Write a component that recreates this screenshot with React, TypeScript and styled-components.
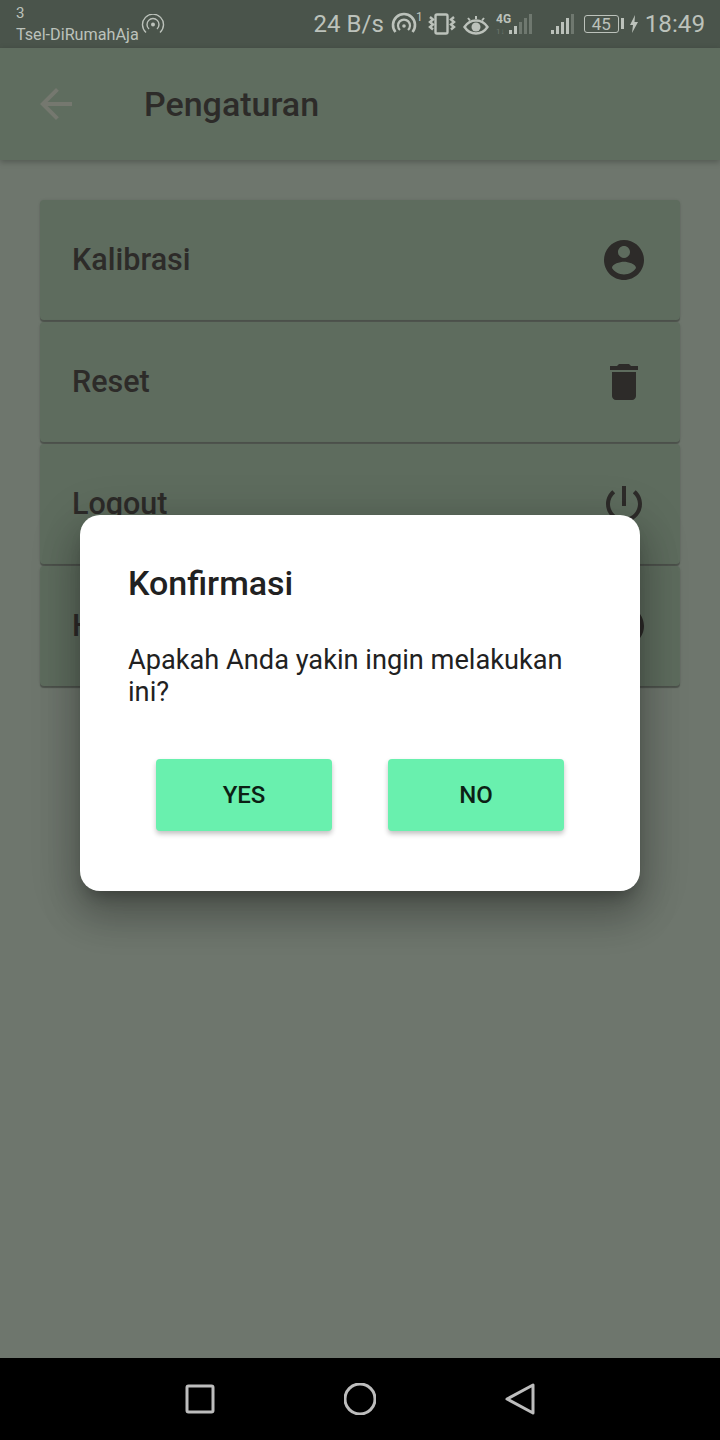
import * as React from 'react';
import styled, { createGlobalStyle } from 'styled-components';

const GlobalStyle = createGlobalStyle`
  html, body {
    margin: 0;
    padding: 0;
    background: #6e766d;
    font-family: Roboto, "Liberation Sans", sans-serif;
  }
`;

const Screen = styled.div`
  position: relative;
  width: 720px;
  height: 1440px;
  display: flex;
  flex-direction: column;
  overflow: hidden;
  background: #6e766d;
`;

const StatusBar = styled.div`
  height: 48px;
  flex: none;
  display: flex;
  align-items: center;
  justify-content: space-between;
  padding: 0 15px 0 16px;
  background: #4a544b;
  color: #bcc2bb;
`;

const CarrierGroup = styled.div`
  align-self: flex-start;
  display: flex;
  align-items: flex-start;
  gap: 2px;
`;

const CarrierText = styled.div`
  display: flex;
  flex-direction: column;
  font-size: 15px;
  line-height: 18px;
  margin-top: 4px;
`;

const CarrierName = styled.span`
  font-size: 16.2px;
  line-height: 20px;
  margin-top: 3px;
`;

const HotspotIcon = styled.svg`
  width: 24px;
  height: 24px;
  margin-top: 14px;
`;

const StatusRight = styled.div`
  display: flex;
  align-items: center;
`;

const Speed = styled.span`
  font-size: 24px;
  margin-right: 7px;
`;

const StatusIcon = styled.svg<{ $gap?: number }>`
  display: block;
  flex: none;
  margin-right: ${(p) => p.$gap ?? 0}px;
`;

const Battery = styled.div`
  position: relative;
  width: 35px;
  height: 18px;
  box-sizing: border-box;
  border: 1.5px solid #bcc2bb;
  border-radius: 3px;
  margin-right: 10px;
  font-size: 17px;
  line-height: 16px;
  text-align: center;

  &::after {
    content: '';
    position: absolute;
    right: -6px;
    top: 2px;
    width: 3px;
    height: 11px;
    background: #bcc2bb;
  }
`;

const Clock = styled.span`
  font-size: 24.2px;
  margin-left: 6px;
`;

const AppBar = styled.div`
  height: 112px;
  flex: none;
  display: flex;
  align-items: center;
  gap: 64px;
  padding-left: 32px;
  background: #5f6d5f;
  box-shadow: 0 2px 6px rgba(0, 0, 0, 0.25);
  z-index: 1;
`;

const BackIcon = styled.svg`
  width: 48px;
  height: 48px;
  fill: #75786f;
`;

const Title = styled.h1`
  margin: 0;
  font-size: 34px;
  font-weight: 500;
  color: #2d2b29;
`;

const Main = styled.div`
  flex: 1;
  display: flex;
  flex-direction: column;
  gap: 2px;
  padding: 40px;
`;

const Card = styled.div`
  height: 120px;
  flex: none;
  box-sizing: border-box;
  display: flex;
  align-items: center;
  justify-content: space-between;
  padding: 0 32px;
  background: #5e6c5e;
  border-radius: 4px;
  box-shadow: 0 2px 1px rgba(0, 0, 0, 0.28), 0 0 3px rgba(0, 0, 0, 0.1);
`;

const CardLabel = styled.span`
  padding-bottom: 2px;
  font-size: 30.5px;
  font-weight: 500;
  color: #2d2b29;
`;

const CardIcon = styled.svg`
  width: 48px;
  height: 48px;
  fill: #2d2b29;
`;

const NavBar = styled.div`
  height: 82px;
  flex: none;
  display: flex;
  align-items: center;
  justify-content: center;
  gap: 128px;
  background: #000;
`;

const NavIcon = styled.svg`
  width: 32px;
  height: 32px;
  fill: none;
  stroke: #bdbdbd;
  stroke-width: 3;
  stroke-linejoin: round;
`;

const Overlay = styled.div`
  position: absolute;
  top: 48px;
  left: 0;
  right: 0;
  bottom: 82px;
  z-index: 2;
  display: flex;
  align-items: center;
  justify-content: center;
`;

const Dialog = styled.div`
  width: 560px;
  height: 376px;
  box-sizing: border-box;
  padding: 48px 48px 0;
  background: #fff;
  border-radius: 20px;
  box-shadow: 0 24px 38px 3px rgba(0, 0, 0, 0.2), 0 9px 46px 8px rgba(0, 0, 0, 0.14),
    0 11px 15px -7px rgba(0, 0, 0, 0.26);
`;

const DialogTitle = styled.h2`
  margin: 0;
  font-size: 34px;
  line-height: 40px;
  font-weight: 500;
  color: #212121;
`;

const DialogBody = styled.p`
  margin: 41px 0 0;
  font-size: 27.2px;
  line-height: 32px;
  font-weight: 400;
  color: #212121;
`;

const DialogActions = styled.div`
  display: flex;
  justify-content: center;
  gap: 56px;
  margin-top: 51px;
`;

const DialogButton = styled.button`
  width: 176px;
  height: 72px;
  border: none;
  padding: 0;
  border-radius: 4px;
  background: #69f0ae;
  color: #0c1f15;
  font-family: inherit;
  font-size: 24px;
  font-weight: 500;
  box-shadow: 0 3px 5px rgba(0, 0, 0, 0.24);
`;

const cards = [
  {
    label: 'Kalibrasi',
    icon: 'M12 2C6.48 2 2 6.48 2 12s4.48 10 10 10 10-4.48 10-10S17.52 2 12 2zm0 3c1.66 0 3 1.34 3 3s-1.34 3-3 3-3-1.34-3-3 1.34-3 3-3zm0 14.2c-2.5 0-4.71-1.28-6-3.22.03-1.99 4-3.08 6-3.08 1.99 0 5.97 1.09 6 3.08-1.29 1.94-3.5 3.22-6 3.22z',
  },
  {
    label: 'Reset',
    icon: 'M6 19c0 1.1.9 2 2 2h8c1.1 0 2-.9 2-2V7H6v12zM19 4h-3.5l-1-1h-5l-1 1H5v2h14V4z',
  },
  {
    label: 'Logout',
    icon: 'M13 3h-2v10h2V3zm4.83 2.17l-1.42 1.42C17.99 7.86 19 9.81 19 12c0 3.87-3.13 7-7 7s-7-3.13-7-7c0-2.19 1.01-4.14 2.58-5.42L6.17 5.17C4.23 6.82 3 9.26 3 12c0 4.97 4.03 9 9 9s9-4.03 9-9c0-2.74-1.23-5.18-3.17-6.83z',
  },
  {
    label: 'Help',
    icon: 'M12 2C6.48 2 2 6.48 2 12s4.48 10 10 10 10-4.48 10-10S17.52 2 12 2zm1 17h-2v-2h2v2zm2.07-7.75l-.9.92C13.45 12.9 13 13.5 13 15h-2v-.5c0-1.1.45-2.1 1.17-2.83l1.24-1.26c.37-.36.59-.86.59-1.41 0-1.1-.9-2-2-2s-2 .9-2 2H8c0-2.21 1.79-4 4-4s4 1.79 4 4c0 .88-.36 1.68-.93 2.25z',
  },
];

function SignalBars({ lit, x = 0 }: { lit: number; x?: number }) {
  const bars = [0, 1, 2, 3, 4];
  return (
    <>
      {bars.map((i) => {
        const h = 4 + i * 4;
        return (
          <rect
            key={i}
            x={x + i * 5}
            y={22 - h}
            width={3}
            height={h}
            fill={i < lit ? '#bcc2bb' : '#6f786f'}
          />
        );
      })}
    </>
  );
}

export default function App() {
  return (
    <Screen>
      <GlobalStyle />
      <StatusBar>
        <CarrierGroup>
          <CarrierText>
            3<CarrierName>Tsel-DiRumahAja</CarrierName>
          </CarrierText>
          <HotspotIcon viewBox="0 0 24 24" fill="none" stroke="#bcc2bb" strokeWidth="1.4">
            <circle cx="12" cy="10.5" r="2" fill="#bcc2bb" stroke="none" />
            <path d="M8 15a6 6 0 1 1 8 0" />
            <path d="M5 18.5a10.5 10.5 0 1 1 14 0" />
          </HotspotIcon>
        </CarrierGroup>
        <StatusRight>
          <Speed>24 B/s</Speed>
          <StatusIcon width="32" height="32" viewBox="0 -4 32 32" $gap={5} fill="none" stroke="#bcc2bb">
            <path d="M4.5 20a11 11 0 1 1 17 0" strokeWidth="2.6" />
            <path d="M9 18a6 6 0 1 1 8 0" strokeWidth="2.2" />
            <circle cx="13" cy="14" r="1.8" fill="#bcc2bb" stroke="none" />
            <text x="25" y="9" fontSize="12" fill="#bcc2bb" stroke="none" fontFamily="Roboto">1</text>
          </StatusIcon>
          <StatusIcon width="28" height="24" viewBox="0 0 28 24" $gap={7} fill="none" stroke="#bcc2bb" strokeWidth="2.4">
            <rect x="7.5" y="2.5" width="12" height="19" rx="1.5" />
            <path d="M2 5l3 2.5-3 2.5 3 2.5-3 2.5 3 2.5" />
            <path d="M26 5l-3 2.5 3 2.5-3 2.5 3 2.5-3 2.5" />
          </StatusIcon>
          <StatusIcon width="26" height="24" viewBox="0 0 26 24" $gap={7} fill="none" stroke="#bcc2bb" strokeWidth="2.4">
            <path d="M1.5 15c3-4.5 7-6.5 11.5-6.5s8.5 2 11.5 6.5c-3 4.5-7 6.5-11.5 6.5s-8.5-2-11.5-6.5z" />
            <circle cx="13" cy="15" r="4.5" fill="#bcc2bb" stroke="none" />
            <path d="M5 6l2 2.5M13 4v3M21 6l-2 2.5" strokeWidth="2" />
          </StatusIcon>
          <StatusIcon width="36" height="24" viewBox="0 0 36 24" $gap={18}>
            <text x="0" y="11" fontSize="12" fontWeight="700" fill="#bcc2bb" fontFamily="Roboto">4G</text>
            <text x="0" y="22" fontSize="8" fill="#6f786f" fontFamily="Roboto">1↓</text>
            <SignalBars lit={2} x={13} />
          </StatusIcon>
          <StatusIcon width="24" height="24" viewBox="0 0 24 24" $gap={10}>
            <SignalBars lit={4} x={1} />
          </StatusIcon>
          <Battery>45</Battery>
          <StatusIcon width="10" height="20" viewBox="0 0 10 20" fill="#bcc2bb">
            <path d="M6 1L1 11h3l-1 8 6-11H5.5z" />
          </StatusIcon>
          <Clock>18:49</Clock>
        </StatusRight>
      </StatusBar>
      <AppBar>
        <BackIcon viewBox="0 0 24 24">
          <path d="M20 11H7.83l5.59-5.59L12 4l-8 8 8 8 1.41-1.41L7.83 13H20v-2z" />
        </BackIcon>
        <Title>Pengaturan</Title>
      </AppBar>
      <Main>
        {cards.map((card) => (
          <Card key={card.label}>
            <CardLabel>{card.label}</CardLabel>
            <CardIcon viewBox="0 0 24 24">
              <path d={card.icon} />
            </CardIcon>
          </Card>
        ))}
      </Main>
      <NavBar>
        <NavIcon viewBox="0 0 32 32">
          <rect x="3" y="3" width="26" height="26" rx="1.5" />
        </NavIcon>
        <NavIcon viewBox="0 0 32 32">
          <circle cx="16" cy="16" r="15" />
        </NavIcon>
        <NavIcon viewBox="0 0 32 32">
          <path d="M29 2v28L3 16z" />
        </NavIcon>
      </NavBar>
      <Overlay>
        <Dialog>
          <DialogTitle>Konfirmasi</DialogTitle>
          <DialogBody>Apakah Anda yakin ingin melakukan ini?</DialogBody>
          <DialogActions>
            <DialogButton>YES</DialogButton>
            <DialogButton>NO</DialogButton>
          </DialogActions>
        </Dialog>
      </Overlay>
    </Screen>
  );
}
